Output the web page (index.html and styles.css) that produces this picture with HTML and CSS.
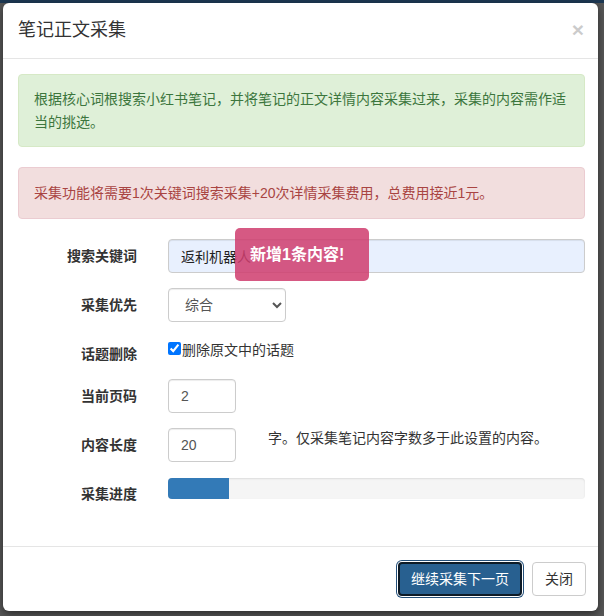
FILE: index.html
```html
<!DOCTYPE html>
<html lang="zh-CN">
<head>
<meta charset="utf-8">
<title>笔记正文采集</title>
<link rel="stylesheet" href="styles.css">
</head>
<body>
<div class="modal">
  <div class="modal-header">
    <h4 class="modal-title">笔记正文采集</h4>
    <button class="close" type="button">×</button>
  </div>
  <div class="modal-body">
    <div class="alert alert-success">根据核心词根搜索小红书笔记，并将笔记的正文详情内容采集过来，采集的内容需作适<br>当的挑选。</div>
    <div class="alert alert-danger">采集功能将需要1次关键词搜索采集+20次详情采集费用，总费用接近1元。</div>
    <form class="form">
      <div class="form-row">
        <label class="form-label">搜索关键词</label>
        <div class="form-field field-rel">
          <input class="form-control autofill" type="text" value="返利机器人">
          <div class="toast">新增1条内容!</div>
        </div>
      </div>
      <div class="form-row">
        <label class="form-label">采集优先</label>
        <div class="form-field">
          <select class="form-control select-sm">
            <option>综合</option>
          </select>
        </div>
      </div>
      <div class="form-row">
        <label class="form-label">话题删除</label>
        <div class="form-field">
          <label class="check"><input type="checkbox" checked>删除原文中的话题</label>
        </div>
      </div>
      <div class="form-row">
        <label class="form-label">当前页码</label>
        <div class="form-field">
          <input class="form-control input-xs" type="text" value="2">
        </div>
      </div>
      <div class="form-row">
        <label class="form-label">内容长度</label>
        <div class="form-field field-inline">
          <input class="form-control input-xs" type="text" value="20">
          <span class="help">字。仅采集笔记内容字数多于此设置的内容。</span>
        </div>
      </div>
      <div class="form-row">
        <label class="form-label">采集进度</label>
        <div class="form-field">
          <div class="progress"><div class="progress-bar" style="width: 14.6%"></div></div>
        </div>
      </div>
    </form>
  </div>
  <div class="modal-footer">
    <button class="btn btn-primary" type="button">继续采集下一页</button>
    <button class="btn btn-default" type="button">关闭</button>
  </div>
</div>
</body>
</html>
```

FILE: styles.css
```css
* { box-sizing: border-box; }
html, body { margin: 0; padding: 0; }
body {
  width: 604px;
  height: 616px;
  overflow: hidden;
  background: linear-gradient(#1d3853 0, #1d3853 3px, #575757 3px, #575757 100%);
  font-family: "Liberation Sans", "Noto Sans CJK SC", sans-serif;
  font-size: 14px;
  line-height: 20px;
  color: #333;
  padding: 3px 0 0 3px;
}
.modal {
  width: 595px;
  height: 608px;
  background: #fff;
  border-radius: 6px;
  display: flex;
  flex-direction: column;
  box-shadow: 0 3px 9px rgba(0,0,0,.5);
}
.modal-header {
  display: flex;
  justify-content: space-between;
  align-items: flex-start;
  padding: 15px 14px 15px 15px;
  border-bottom: 1px solid #e5e5e5;
}
.modal-title {
  margin: 0;
  font-size: 18px;
  font-weight: 400;
  line-height: 25px;
  color: #333;
}
.close {
  border: 0;
  background: none;
  padding: 0;
  margin-top: 1px;
  font-family: "Liberation Sans", sans-serif;
  font-size: 21px;
  font-weight: bold;
  line-height: 21px;
  color: #000;
  opacity: .2;
}
.modal-body {
  flex: 1;
  padding: 15px 13px 15px 15px;
}
.alert {
  padding: 15px;
  border: 1px solid transparent;
  border-radius: 4px;
  margin-bottom: 20px;
}
.alert-success {
  background: #dff0d8;
  border-color: #d6e9c6;
  color: #3c763d;
  line-height: 23px;
  padding: 13px 15px 12px;
}
.alert-danger {
  background: #f2dede;
  border-color: #ebccd1;
  color: #a94442;
  line-height: 20px;
}
.form { margin: 0; }
.form-row {
  display: grid;
  grid-template-columns: 119px 1fr;
  column-gap: 31px;
  margin-bottom: 15px;
}
.form-label {
  text-align: right;
  font-weight: bold;
  padding-top: 7px;
  line-height: 20px;
  color: #333;
}
.form-field { min-width: 0; }
.field-rel { position: relative; }
.form-control {
  display: block;
  width: 100%;
  height: 34px;
  padding: 6px 12px;
  font-family: "Liberation Sans", "Noto Sans CJK SC", sans-serif;
  font-size: 14px;
  line-height: 20px;
  color: #555;
  background: #fff;
  border: 1px solid #ccc;
  border-radius: 4px;
  box-shadow: inset 0 1px 1px rgba(0,0,0,.075);
  outline: none;
}
.autofill {
  background: #e8f0fe;
  color: #222;
}
.select-sm {
  width: 118px;
  padding: 6px 8px 6px 12px;
}
.input-xs { width: 68px; }
.field-inline {
  display: flex;
  align-items: flex-start;
  gap: 32px;
}
.help {
  line-height: 20px;
  color: #333;
}
.check {
  display: flex;
  align-items: flex-start;
  padding-top: 3px;
  line-height: 20px;
  color: #333;
}
.check input {
  margin: 2px 1px 0 0;
  width: 13px;
  height: 13px;
}
.toast {
  position: absolute;
  left: 67px;
  top: -11px;
  width: 134px;
  height: 53px;
  padding-left: 15px;
  border-radius: 5px;
  background: rgba(207, 62, 111, .86);
  color: #fff;
  font-size: 16px;
  font-weight: bold;
  line-height: 53px;
  white-space: nowrap;
}
.progress {
  height: 21px;
  margin-top: 1px;
  background: #f5f5f5;
  border-radius: 4px;
  overflow: hidden;
  box-shadow: inset 0 1px 2px rgba(0,0,0,.1);
}
.progress-bar {
  height: 100%;
  background: #337ab7;
}
.modal-footer {
  display: flex;
  justify-content: flex-end;
  gap: 10px;
  padding: 15px 12px 15px 15px;
  border-top: 1px solid #e5e5e5;
}
.btn {
  height: 34px;
  padding: 6px 12px;
  font-family: "Liberation Sans", "Noto Sans CJK SC", sans-serif;
  font-size: 14px;
  line-height: 20px;
  border-radius: 4px;
  border: 1px solid transparent;
  white-space: nowrap;
}
.btn-primary {
  background: #286090;
  color: #fff;
  border: 2px solid #0d1b27;
  padding: 5px 11px;
  box-shadow: 0 0 0 1px #fff, 0 0 0 2px #24507a;
}
.btn-default {
  background: #fff;
  color: #333;
  border-color: #ccc;
}
```
